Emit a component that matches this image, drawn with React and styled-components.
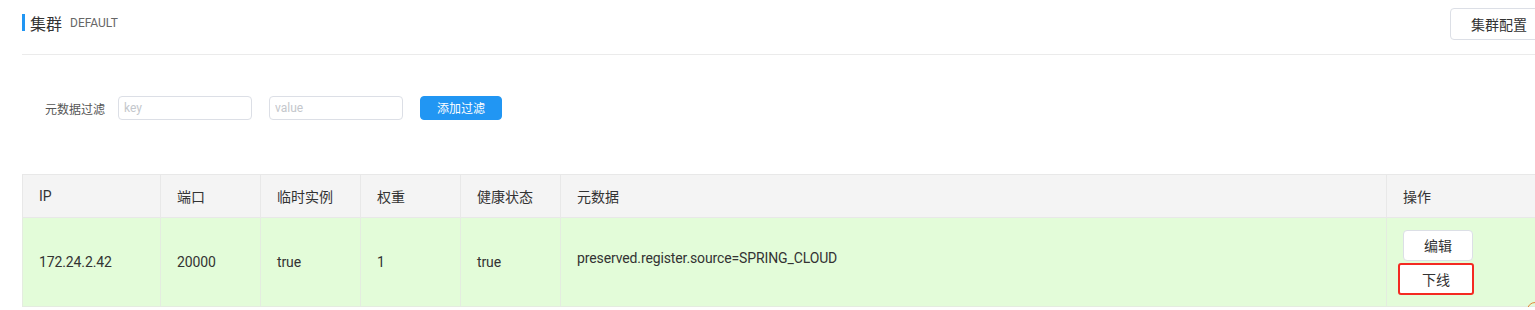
import styled, { createGlobalStyle } from "styled-components";

const GlobalStyle = createGlobalStyle`
  html, body {
    margin: 0;
    padding: 0;
    overflow: hidden;
    background: #fff;
  }
  body {
    font-family: Roboto, "Noto Sans CJK SC", sans-serif;
    color: #333;
  }
`;

const Page = styled.div`
  width: 1526px;
  padding-left: 22px;
  position: relative;
`;

const Header = styled.div`
  height: 55px;
  border-bottom: 1px solid #ebebeb;
  display: flex;
  align-items: center;
  justify-content: space-between;
  box-sizing: border-box;
`;

const Title = styled.div`
  display: flex;
  align-items: center;
  border-left: 3px solid #2196f3;
  height: 17px;
  padding-left: 5px;
  margin-top: -9px;
  .name {
    font-size: 16px;
    color: #333;
    font-family: "Noto Sans CJK SC", sans-serif;
  }
  .ns {
    font-size: 12px;
    color: #666;
    margin-left: 8px;
  }
`;

const Button = styled.button`
  font-family: "Noto Sans CJK SC", sans-serif;
  font-size: ${(p) => p.size || 14}px;
  width: ${(p) => p.w || 98}px;
  height: ${(p) => p.h || 32}px;
  padding: 0;
  box-sizing: border-box;
  white-space: nowrap;
  border-radius: 4px;
  border: 1px solid ${(p) => (p.primary ? "#2196f3" : "#dcdfe6")};
  background: ${(p) => (p.primary ? "#2196f3" : "#fff")};
  color: ${(p) => (p.primary ? "#fff" : "#333")};
  line-height: 1;
  cursor: pointer;
`;

const ConfigButton = styled(Button)`
  margin-top: -6px;
`;

const FilterRow = styled.div`
  display: flex;
  align-items: center;
  padding-left: 23px;
  margin-top: 41px;
  height: 24px;
  gap: 17px;
`;

const Label = styled.span`
  font-size: 12px;
  color: #555;
  font-family: "Noto Sans CJK SC", sans-serif;
  margin-right: -4px;
`;

const Input = styled.input`
  width: 134px;
  height: 24px;
  box-sizing: border-box;
  border: 1px solid #dcdfe6;
  border-radius: 4px;
  padding: 0 5px;
  font-size: 12px;
  font-family: Roboto, sans-serif;
  outline: none;
  &::placeholder {
    color: #c4c7cc;
  }
`;

const Table = styled.table`
  margin-top: 54px;
  width: 1526px;
  border-collapse: collapse;
  font-size: 14px;
  table-layout: fixed;
`;

const Th = styled.th`
  text-align: left;
  font-weight: normal;
  height: 43px;
  padding: 0 0 0 16px;
  background: #f4f4f4;
  border: 1px solid #e8e8e8;
  color: #333;
  font-family: Roboto, "Noto Sans CJK SC", sans-serif;
  box-sizing: border-box;
`;

const Td = styled.td`
  height: 89px;
  padding: 0 0 ${(p) => p.shift || 0}px 16px;
  background: #e3fcd9;
  border: 1px solid #e4ece0;
  color: #333;
  letter-spacing: -0.12px;
  box-sizing: border-box;
`;

const Ops = styled.div`
  display: flex;
  flex-direction: column;
  align-items: flex-start;
  gap: 2px;
`;

const Marked = styled.div`
  border: 2px solid #f42a22;
  border-radius: 3px;
  margin-left: -5px;
  width: 76px;
  height: 32px;
  display: flex;
  align-items: center;
  justify-content: center;
  box-sizing: border-box;
  font-family: "Noto Sans CJK SC", sans-serif;
  font-size: 14px;
  background: #fff;
`;

const Bubble = styled.div`
  position: absolute;
  left: 1527px;
  top: 302px;
  width: 16px;
  height: 16px;
  border-radius: 50%;
  border: 1px solid #e08a3a;
  box-sizing: border-box;
`;

const columns = [
  { key: "ip", title: "IP", width: 138 },
  { key: "port", title: "端口", width: 100 },
  { key: "ephemeral", title: "临时实例", width: 100 },
  { key: "weight", title: "权重", width: 100 },
  { key: "healthy", title: "健康状态", width: 100 },
  { key: "meta", title: "元数据", width: 826 },
  { key: "ops", title: "操作", width: 162 },
];

const row = {
  ip: "172.24.2.42",
  port: "20000",
  ephemeral: "true",
  weight: "1",
  healthy: "true",
  meta: "preserved.register.source=SPRING_CLOUD",
};

export default function App() {
  return (
    <>
      <GlobalStyle />
      <Page>
        <Header>
          <Title>
            <span className="name">集群</span>
            <span className="ns">DEFAULT</span>
          </Title>
          <ConfigButton>集群配置</ConfigButton>
        </Header>

        <FilterRow>
          <Label>元数据过滤</Label>
          <Input placeholder="key" />
          <Input placeholder="value" />
          <Button primary size={12} h={24} w={82}>
            添加过滤
          </Button>
        </FilterRow>

        <Table>
          <colgroup>
            {columns.map((c) => (
              <col key={c.key} style={{ width: c.width }} />
            ))}
          </colgroup>
          <thead>
            <tr>
              {columns.map((c) => (
                <Th key={c.key}>{c.title}</Th>
              ))}
            </tr>
          </thead>
          <tbody>
            <tr>
              <Td>{row.ip}</Td>
              <Td>{row.port}</Td>
              <Td>{row.ephemeral}</Td>
              <Td>{row.weight}</Td>
              <Td>{row.healthy}</Td>
              <Td shift={8}>{row.meta}</Td>
              <Td>
                <Ops>
                  <Button w={70} h={31}>编辑</Button>
                  <Marked>下线</Marked>
                </Ops>
              </Td>
            </tr>
          </tbody>
        </Table>
        <Bubble />
      </Page>
    </>
  );
}
